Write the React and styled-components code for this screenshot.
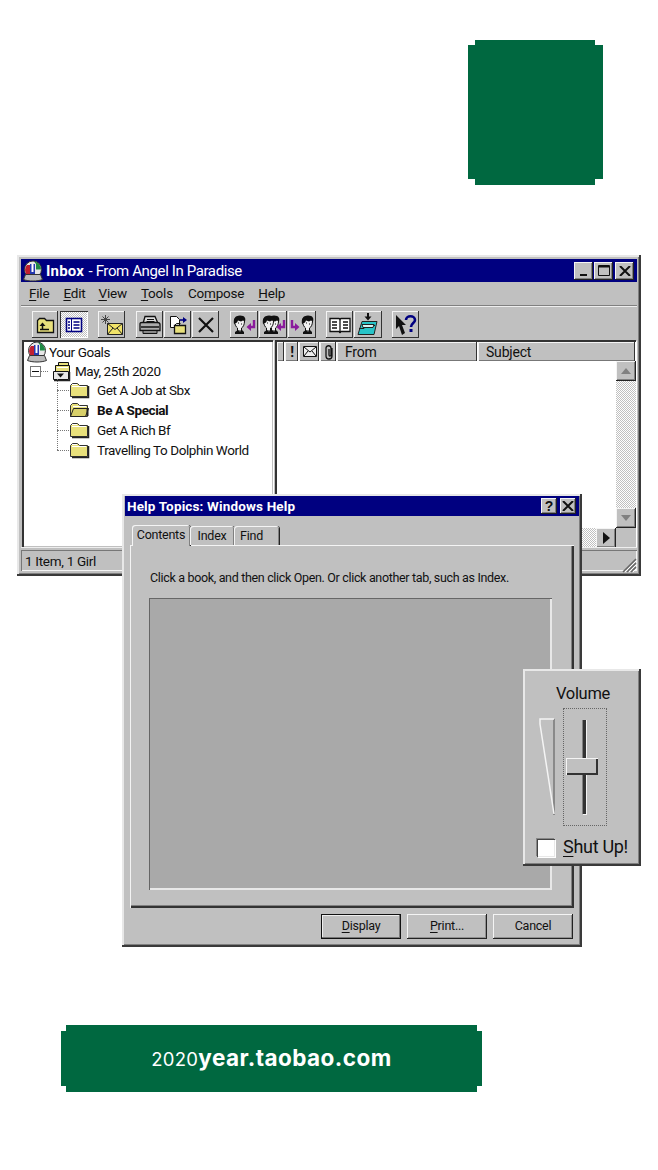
import React from 'react';
import styled, { createGlobalStyle, css } from 'styled-components';

const Global = createGlobalStyle`
  html, body { margin: 0; padding: 0; background: #fff; }
  body { font-family: Roboto, "Liberation Sans", Arial, sans-serif; color: #111; }
  * { box-sizing: border-box; }
`;
const GREEN = '#006840';
const FACE = '#c0c0c0';
const raised = css`box-shadow: inset -1px -1px 0 #222, inset 1px 1px 0 #f4f4f4, inset -2px -2px 0 #808080;`;
const windowEdge = css`box-shadow: inset -2px -2px 0 #3a3a3a, inset 2px 2px 0 #e8e8e8, inset -3px -3px 0 #808080;`;

const Page = styled.div`width: 658px; height: 1170px; background: #fff; overflow: hidden; display: flex; flex-direction: column;`;
const Square = styled.div`
  width: 135px; height: 145px; margin: 40px 0 0 468px; background: ${GREEN};
  clip-path: polygon(7px 0, 127px 0, 127px 5px, 135px 5px, 135px 139px, 127px 139px, 127px 145px, 7px 145px, 7px 139px, 0 139px, 0 5px, 7px 5px);
`;
const Desktop = styled.div`position: relative; height: 692px; margin-top: 70px; flex: none;`;
const Banner = styled.div`
  width: 421px; height: 67px; margin: 78px 0 0 61px; background: ${GREEN}; color: #fff;
  display: flex; align-items: baseline; justify-content: center; padding: 19px 0 0 0;
  font-family: "Inter", "Liberation Sans", sans-serif;
  clip-path: polygon(5px 0, 416px 0, 416px 6px, 421px 6px, 421px 61px, 416px 61px, 416px 67px, 5px 67px, 5px 61px, 0 61px, 0 6px, 5px 6px);
`;
const BannerYear = styled.span`font-size: 18.5px; font-weight: 400; letter-spacing: 0.3px;`;
const BannerHost = styled.span`font-size: 22.5px; font-weight: 700; letter-spacing: 0.45px;`;

const Win = styled.section`
  position: absolute; left: ${p => p.$x}px; top: ${p => p.$y}px; width: ${p => p.$w}px; height: ${p => p.$h}px;
  background: ${FACE}; display: flex; flex-direction: column; ${windowEdge};
`;
const TitleBar = styled.header`
  height: ${p => p.$h}px; margin: ${p => p.$m}; background: #000080; color: #fff; display: flex; align-items: center; flex: none;
  padding: 0 3px 0 ${p => p.$pl}px; gap: ${p => p.$gap}px;
`;
const TitleText = styled.div`font-size: 15px; letter-spacing: -0.38px; flex: 1; white-space: nowrap; b { font-weight: 700; letter-spacing: 0.2px; margin-right: 1px; }`;
const DialogTitle = styled.div`font-size: 13.5px; font-weight: 700; letter-spacing: 0.15px; flex: 1; white-space: nowrap;`;
const CapBtns = styled.div`display: flex; align-items: center;`;
const CapBtn = styled.button`
  width: ${p => p.$w}px; height: ${p => p.$tall}px; margin-left: ${p => p.$gap || 0}px; padding: 0; border: 0; background: ${FACE}; ${raised};
  display: flex; align-items: center; justify-content: center; color: #111; font: 700 14px "Liberation Sans", sans-serif;
`;
const Menu = styled.nav`height: 24px; display: flex; align-items: center; padding: 0 0 2px 8px; font-size: 13.5px; flex: none; margin: 0 4px;
  border-bottom: 1px solid #808080; box-shadow: 0 1px 0 #eee;`;
const MenuItem = styled.span`letter-spacing: -0.2px; margin-left: ${p => p.$gap || 0}px; u { text-decoration-thickness: 1px; text-underline-offset: 2px; }`;
const Toolbar = styled.div`height: 33px; display: flex; align-items: center; padding: 2px 0 0 11px; flex: none; margin: 1px 4px 0;`;
const ToolBtn = styled.button`
  width: ${p => p.$w || 27}px; height: 27px; margin-left: ${p => p.$gap || 0}px; padding: 0; border: 0; flex: none;
  display: flex; align-items: center; justify-content: center;
  ${p => p.$on ? css`background: repeating-conic-gradient(#c0c0c0 0 25%, #fff 0 50%) 0 0/2px 2px; box-shadow: inset 1px 1px 0 #333, inset -1px -1px 0 #fff;` : css`background: ${FACE}; box-shadow: inset -1px -1px 0 #333, inset 1px 1px 0 #f4f4f4;`}
`;
const Split = styled.div`flex: 1; display: flex; margin: 0 5px 0 5px; gap: 2px; min-height: 0;`;
const TreePane = styled.div`
  width: 251px; background: #fff; padding: 0 0 0 2px; font-size: 13.5px; letter-spacing: -0.42px;
  border-left: 2px solid #333; border-top: 2px solid #333; box-shadow: inset -1px -1px 0 #c0c0c0, 1px 1px 0 #fff;
`;
const TreeRow = styled.div`
  height: ${p => p.$h || 19.9}px; display: flex; align-items: center; position: relative; gap: ${p => p.$gap ?? 7}px;
  padding-left: ${p => p.$pad}px; font-weight: ${p => p.$bold ? 700 : 400}; white-space: nowrap;
`;
const Expander = styled.span`
  width: 11px; height: 11px; border: 1px solid #777; background: #fff; display: flex; align-items: center; justify-content: center; margin-right: 6px;
  position: relative; flex: none;
  &::before { content: ""; width: 7px; height: 1px; background: #111; }
  &::after { content: ""; position: absolute; left: 10px; top: 4px; width: 7px; border-top: 1px dotted #777; }
`;
const Branches = styled.div`
  margin-left: 31px; position: relative;
  &::before { content: ""; position: absolute; left: 0; top: -1px; height: 71px; border-left: 1px dotted #777; }
`;
const Branch = styled(TreeRow)`
  padding-left: 12px;
  &::before { content: ""; width: 12px; position: absolute; left: 0; top: 10px; border-top: 1px dotted #777; }
`;
const ListPane = styled.div`
  flex: 1; display: flex; flex-direction: column; min-width: 0; position: relative;
  border-left: 2px solid #333; border-top: 2px solid #333; box-shadow: 1px 1px 0 #fff;
`;
const Header = styled.div`display: flex; height: 19px; flex: none;`;
const HeadCell = styled.div`
  width: ${p => p.$w}px; flex: ${p => p.$grow ? 1 : 'none'}; background: ${FACE}; font-size: 14px; letter-spacing: -0.2px;
  display: flex; align-items: center; justify-content: ${p => p.$grow || p.$left ? 'flex-start' : 'center'}; padding-left: ${p => p.$left ? 8 : 0}px;
  box-shadow: inset -1px 0 0 #fff, inset -2px 0 0 #333, inset 1px 1px 0 #f4f4f4, inset 0 -1px 0 #777;
`;
const ListBody = styled.div`flex: 1; display: flex; background: #fff; min-height: 0;`;
const ListEmpty = styled.div`flex: 1;`;
const VScroll = styled.div`
  width: 20px; background: repeating-conic-gradient(#c0c0c0 0 25%, #fff 0 50%) 0 0/2px 2px; display: flex; flex-direction: column; justify-content: space-between;
`;
const ScrollBtn = styled.div`
  width: 20px; height: 20px; background: ${FACE}; ${raised}; display: flex; align-items: center; justify-content: center; flex: none;
`;
const HScroll = styled.div`height: 19px; display: flex; justify-content: flex-end; background: repeating-conic-gradient(#c0c0c0 0 25%, #fff 0 50%) 0 0/2px 2px; flex: none;`;
const Corner = styled.div`width: 20px; background: ${FACE};`;
const StatusBar = styled.footer`height: 26px; flex: none; display: flex; margin: 0 4px 3px; padding: 3px 0 0; position: relative; box-shadow: inset 0 1px 0 #eee;`;
const StatusCell = styled.div`flex: 1; font-size: 13.5px; height: 21px; letter-spacing: -0.3px; padding-left: 4px; display: flex; align-items: center;
  box-shadow: inset 1px 1px 0 #777, inset -1px -1px 0 #f4f4f4;`;
const Grip = styled.svg`position: absolute; right: 0; bottom: 0;`;

const TabRow = styled.div`display: flex; align-items: flex-end; height: 29px; margin: 0 0 0 10px; padding-top: 8px; flex: none; position: relative; z-index: 1;`;
const Tab = styled.div`
  height: ${p => p.$on ? 21 : 19}px; width: ${p => p.$w}px; font-size: 12.5px; display: flex; align-items: center; justify-content: center;
  background: ${FACE}; border-radius: 3px 3px 0 0; letter-spacing: -0.25px; margin-bottom: ${p => p.$on ? -1 : 0}px;
  box-shadow: inset 1px 1px 0 #f4f4f4, inset -1px 0 0 #808080, 1px 0 0 #222;
  padding: 0 ${p => p.$pr || 0}px ${p => p.$on ? 2 : 0}px 0;
`;
const TabPanel = styled.div`
  flex: 1; margin: 0 8px 0 8px; padding: 25px 22px 18px 19px; display: flex; flex-direction: column; min-height: 0;
  box-shadow: inset 1px 1px 0 #f4f4f4, inset -2px -2px 0 #333, inset -3px -3px 0 #808080;
`;
const Hint = styled.p`margin: 0 0 12px; font-size: 12.5px; line-height: 16px; height: 16px; letter-spacing: -0.33px; padding-left: 1px; white-space: nowrap;`;
const BookArea = styled.div`
  flex: 1; background: #a9a9a9; box-shadow: inset 1px 1px 0 #666, inset -2px -2px 0 #e8e8e8;
`;
const DialogFoot = styled.div`display: flex; gap: 6px; justify-content: flex-end; height: 39px; padding: 6px 9px 8px 0; flex: none;`;
const PushBtn = styled.button`
  width: 80px; height: 25px; padding: 0 0 3px; border: 0; background: ${FACE}; color: #111; font: 12.5px Roboto, "Liberation Sans", sans-serif; letter-spacing: -0.25px;
  box-shadow: ${p => p.$def ? 'inset 0 0 0 1px #111, inset -2px -2px 0 #777, inset 2px 2px 0 #eee' : 'inset -1px -1px 0 #222, inset 1px 1px 0 #f4f4f4, inset -2px -2px 0 #909090'};
  u { text-underline-offset: 2px; text-decoration-thickness: 1px; }
`;
const VolTitle = styled.div`font-size: 16.5px; text-align: center; letter-spacing: -0.3px; margin-top: 15px; height: 20px; line-height: 20px; padding-left: 2px;`;
const VolBody = styled.div`display: flex; margin-top: 4px; padding-left: 16px; gap: 8px; height: 118px;`;
const Wedge = styled.svg`margin-top: 10px; flex: none;`;
const SliderFrame = styled.div`width: 44px; height: 118px; border: 1px dotted #666; position: relative; display: flex; justify-content: center; padding: 11px 0 10px;`;
const SliderTrack = styled.div`width: 5px; height: 100%; background: #333; border-right: 1px solid #f4f4f4; border-bottom: 1px solid #f4f4f4; margin-right: 2px; border-left: 1px solid #808080;`;
const SliderThumb = styled.div`position: absolute; left: 2px; top: 49px; width: 32px; height: 17px; background: ${FACE};
  box-shadow: inset 1px 1px 0 #f4f4f4, inset -2px -2px 0 #333;`;
const Shut = styled.label`display: flex; align-items: center; gap: 8px; padding-left: 14px; margin-top: 10px; font-size: 18px; letter-spacing: -0.3px;
  u { text-underline-offset: 3px; text-decoration-thickness: 1px; }`;
const Check = styled.span`width: 18px; height: 18px; background: #fff; box-shadow: inset 1px 1px 0 #444, inset -1px -1px 0 #e8e8e8, 1px 1px 0 #fff, -1px -1px 0 #888; flex: none; margin-top: 3px;`;

/* icons */
const Y = '#e8e07c';
const Folder = ({ open }) => (
  <svg width="21" height="18" viewBox="0 0 21 18">
    <path d="M1.5 15.5v-11l2-2h5l2 2h8v11z" fill={Y} stroke="#333" />
    {open
      ? <><path d="M1.5 15.5l3-8h15l-3 8z" fill="#d8d06a" stroke="#222" /><path d="M4 5.5h13" stroke="#fff" /><path d="M18.5 7v8" stroke="#222" strokeWidth="2" /></>
      : <><path d="M3 5.5h14" stroke="#fff" /><path d="M3 3.5h5" stroke="#fff" /><path d="M19.5 5v11.5H3" fill="none" stroke="#222" strokeWidth="1.5" /></>}
  </svg>
);
const UpFolder = () => (
  <svg width="20" height="20" viewBox="0 0 20 20">
    <path d="M2.5 17.5v-12l2-2h5l2 2h7v12z" fill={Y} stroke="#111" strokeWidth="1.3" />
    <path d="M5 14.5h9" stroke="#111" strokeWidth="1.5" />
    <path d="M7.5 14.5V10" stroke="#111" strokeWidth="1.5" />
    <path d="M4.5 11l3-3.5 3 3.5z" fill="#111" />
  </svg>
);
const TreeIcon = () => (
  <svg width="20" height="20" viewBox="0 0 20 20"><rect x="2.5" y="3.5" width="15" height="13" fill="#fff" stroke="#000080" strokeWidth="1.6" /><path d="M7.5 4v12" stroke="#000080" /><path d="M4 7h2M4 10h2M4 13h2M9.5 7h6M9.5 10h6M9.5 13h6" stroke="#000080" strokeWidth="1.4" /></svg>
);
const NewMail = () => (
  <svg width="22" height="20" viewBox="0 0 22 20"><path d="M6.5 8.5h15v11h-15z" fill="#f0e268" stroke="#222" /><path d="M6.5 8.5l7.5 6 7.5-6M6.5 19.5l5.5-6.5M21.5 19.5l-5.5-6.5" fill="none" stroke="#222" /><path d="M4.5 0v9M0 4.5h9M1.5 1.5l6 6M7.5 1.5l-6 6" stroke="#444" /></svg>
);
const Printer = () => (
  <svg width="23" height="21" viewBox="0 0 23 21"><path d="M7 2.5h10l3 7H5z" fill="#ddd" stroke="#111" strokeWidth="1.3" /><path d="M9 5.5h7M8.5 7.5h8" stroke="#111" /><path d="M2 9.5c0-1 1-1 2-1h15c1 0 3 0 3 2v6H2z" fill="#aaa" stroke="#111" strokeWidth="1.3" /><path d="M3 13h18" stroke="#111" strokeWidth="1.5" /><path d="M5 16.5h14v3H5z" fill="#888" stroke="#111" /></svg>
);
const MoveTo = () => (
  <svg width="22" height="20" viewBox="0 0 22 20"><path d="M3.5 1.5h6l3 3v8h-9z" fill="#fff" stroke="#111" /><path d="M7.5 10.5h11v8h-11z" fill={Y} stroke="#111" strokeWidth="1.3" /><path d="M7.5 10.5l2-2h4" fill="none" stroke="#111" /><path d="M13 5h5" stroke="#000080" strokeWidth="1.6" /><path d="M16 2l4 3-4 3z" fill="#000080" /></svg>
);
const Cross = () => (
  <svg width="20" height="20" viewBox="0 0 20 20"><path d="M3 3l14 14M17 3L3 17" stroke="#111" strokeWidth="2.2" /></svg>
);
const Head = ({ x = 0 }) => (
  <g transform={`translate(${x} 0)`}>
    <path d="M2.5 7c0-3 2-4.5 5-4.5s5 1.5 5 4.5-1 6-3 7v3h-4v-3C4 13 2.5 10 2.5 7z" fill="#f2f2f2" stroke="#111" />
    <path d="M2 10C1 5 3 1.5 8 1.5s6 3 5 6l-2-1-2 1-3-1-1 2z" fill="#111" />
    <path d="M9 10h1M6 9h1" stroke="#111" />
    <path d="M3 18l3-2 2 2 2-2 2 2v2H3z" fill="#111" />
  </g>
);
const ArrowL = ({ x = 0 }) => (
  <g transform={`translate(${x} 0)`}><path d="M8 6v7H4" fill="none" stroke="#8a1b9c" strokeWidth="2.4" /><path d="M5 9l-4.5 4 4.5 4z" fill="#8a1b9c" /></g>
);
const Reply = () => <svg width="25" height="22" viewBox="0 0 25 22"><Head /><ArrowL x={14} /></svg>;
const ReplyAll = () => <svg width="25" height="22" viewBox="0 0 25 22"><Head x={5} /><Head /><ArrowL x={15} /></svg>;
const Forward = () => (
  <svg width="25" height="22" viewBox="0 0 25 22"><g transform="translate(10 0)"><Head /></g><path d="M2 6v7h4" fill="none" stroke="#8a1b9c" strokeWidth="2.4" /><path d="M5 9l4.5 4-4.5 4z" fill="#8a1b9c" /></svg>
);
const Book = () => (
  <svg width="22" height="20" viewBox="0 0 22 20"><path d="M1 3.5h9l1 1 1-1h9v13H12l-1 1-1-1H1z" fill="#fff" stroke="#111" strokeWidth="1.3" /><path d="M11 5v13M3 7h5M3 10h5M3 13h5M14 7h5M14 10h5M14 13h5" stroke="#111" strokeWidth="1.3" /></svg>
);
const Tray = () => (
  <svg width="24" height="24" viewBox="0 0 24 24"><path d="M12 0v4" stroke="#111" strokeWidth="2" /><path d="M8.5 3.5h7l-3.5 4z" fill="#111" /><path d="M6 8.5h15l-3 13H2z" fill="#28c4c8" stroke="#222" /><path d="M3 15.5h5l1-3h10" fill="none" stroke="#222" /><path d="M6 11.5h12l-1 3H7z" fill="#d8f4f4" stroke="#222" /></svg>
);
const HelpCursor = () => (
  <svg width="26" height="24" viewBox="0 0 26 24"><path d="M3 2l10 10H9l3 8-3 2-3-9-3 3z" fill="#111" /><path d="M13 7c0-5 9-5 9 0 0 3-4 3-4 7" fill="none" stroke="#000080" strokeWidth="2.6" /><path d="M16.5 16h3v3h-3z" fill="#000080" /></svg>
);
const Globe = () => (
  <svg width="22" height="22" viewBox="0 0 22 22"><circle cx="11" cy="9.5" r="8.5" fill="#e8e8e8" stroke="#333" /><path d="M12 1.5a8 8 0 0 1 7 8h-5V4z" fill="#1e8a44" /><path d="M3 10c0-1 1-4 2-5h3v9H4z" fill="#c02030" /><path d="M8 4h5v10H8z" fill="#2438b0" /><path d="M10.5 4v8" stroke="#fff" strokeWidth="2" /><path d="M3.5 14.5h15l2 5c-5 2-14 2-19 0z" fill="#bbb" stroke="#333" /></svg>
);
const Cabinet = () => (
  <svg width="22" height="21" viewBox="0 0 22 21"><path d="M8.5 1.5h10v10h-10z" fill={Y} stroke="#111" /><path d="M5.5 4.5h14v8h-14z" fill={Y} stroke="#111" /><path d="M7 6.5h11" stroke="#fff" /><path d="M3.5 10.5h15v8h-15z" fill="#e8e8e8" stroke="#111" /><path d="M19.5 11v8.5H4" fill="none" stroke="#222" strokeWidth="1.5" /><path d="M7 12.5h7l-3.5 4z" fill="#111" /></svg>
);
const ArrowUp = ({ c = '#808080' }) => <svg width="10" height="6" viewBox="0 0 10 6"><path d="M5 0l5 6H0z" fill={c} /></svg>;
const ArrowDown = ({ c = '#808080' }) => <svg width="10" height="6" viewBox="0 0 10 6"><path d="M5 6l5-6H0z" fill={c} /></svg>;
const ArrowRight = () => <svg width="7" height="12" viewBox="0 0 7 12"><path d="M0 0l7 6-7 6z" fill="#111" /></svg>;
const Min = () => <svg width="10" height="11"><path d="M1 9h7v2H1z" fill="#111" /></svg>;
const Max = () => <svg width="12" height="11"><path d="M.5.5h11v10H.5z" fill="none" stroke="#111" /><path d="M1 1.5h10" stroke="#111" strokeWidth="2" /></svg>;
const Close = () => <svg width="12" height="10" viewBox="0 0 12 10"><path d="M1 0l10 10M11 0L1 10" stroke="#111" strokeWidth="2" /></svg>;
const Envelope = () => <svg width="14" height="11" viewBox="0 0 14 11"><path d="M.5.5h13v10H.5z" fill="#eee" stroke="#111" /><path d="M1 1l6 5 6-5M1 10l4-5M13 10L9 5" fill="none" stroke="#111" /></svg>;
const Clip = () => <svg width="12" height="16" viewBox="0 0 12 16"><path d="M9 4v8c0 4-6 4-6 0V4c0-3 5-3 5 0v7c0 1.5-2 1.5-2 0V5" fill="none" stroke="#111" strokeWidth="1.3" /></svg>;

const App = () => (
  <Page>
    <Global />
    <Square />
    <Desktop>
      <Win $x={17} $y={0} $w={624} $h={321}>
        <TitleBar $h={23} $m="4px 4px 0 4px" $pl={1} $gap={2}>
          <Globe />
          <TitleText><b>Inbox</b> - From Angel In Paradise</TitleText>
          <CapBtns>
            <CapBtn $w={19} $tall={18}><Min /></CapBtn>
            <CapBtn $w={19} $tall={18} $gap={1}><Max /></CapBtn>
            <CapBtn $w={19} $tall={18} $gap={2}><Close /></CapBtn>
          </CapBtns>
        </TitleBar>
        <Menu>
          <MenuItem><u>F</u>ile</MenuItem>
          <MenuItem $gap={14}><u>E</u>dit</MenuItem>
          <MenuItem $gap={13}><u>V</u>iew</MenuItem>
          <MenuItem $gap={14}><u>T</u>ools</MenuItem>
          <MenuItem $gap={15}>Co<u>m</u>pose</MenuItem>
          <MenuItem $gap={14}><u>H</u>elp</MenuItem>
        </Menu>
        <Toolbar>
          <ToolBtn $w={26}><UpFolder /></ToolBtn>
          <ToolBtn $w={28} $gap={2} $on><TreeIcon /></ToolBtn>
          <ToolBtn $gap={10}><NewMail /></ToolBtn>
          <ToolBtn $gap={11}><Printer /></ToolBtn>
          <ToolBtn $gap={1}><MoveTo /></ToolBtn>
          <ToolBtn $gap={1}><Cross /></ToolBtn>
          <ToolBtn $w={28} $gap={11}><Reply /></ToolBtn>
          <ToolBtn $w={28} $gap={1}><ReplyAll /></ToolBtn>
          <ToolBtn $w={28} $gap={1}><Forward /></ToolBtn>
          <ToolBtn $gap={10}><Book /></ToolBtn>
          <ToolBtn $w={28} $gap={1}><Tray /></ToolBtn>
          <ToolBtn $gap={10}><HelpCursor /></ToolBtn>
        </Toolbar>
        <Split>
          <TreePane>
            <TreeRow $pad={0} $gap={1} $h={20}><Globe />Your Goals</TreeRow>
            <TreeRow $pad={4} $gap={3} $h={18}><Expander /><Cabinet />May, 25th 2020</TreeRow>
            <Branches>
              <Branch><Folder />Get A Job at Sbx</Branch>
              <Branch $bold><Folder open />Be A Special</Branch>
              <Branch><Folder />Get A Rich Bf</Branch>
              <Branch><Folder />Travelling To Dolphin World</Branch>
            </Branches>
          </TreePane>
          <ListPane>
            <Header>
              <HeadCell $w={8} />
              <HeadCell $w={14}><b>!</b></HeadCell>
              <HeadCell $w={21}><Envelope /></HeadCell>
              <HeadCell $w={17}><Clip /></HeadCell>
              <HeadCell $w={141} $left>From</HeadCell>
              <HeadCell $grow $left>Subject</HeadCell>
            </Header>
            <ListBody>
              <ListEmpty />
              <VScroll>
                <ScrollBtn><ArrowUp /></ScrollBtn>
                <ScrollBtn><ArrowDown /></ScrollBtn>
              </VScroll>
            </ListBody>
            <HScroll>
              <ScrollBtn><ArrowRight /></ScrollBtn>
              <Corner />
            </HScroll>
          </ListPane>
        </Split>
        <StatusBar>
          <StatusCell>1 Item, 1 Girl</StatusCell>
          <Grip width="16" height="16" viewBox="0 0 16 16"><path d="M15 2L2 15M15 6L6 15M15 10L10 15" stroke="#666" strokeWidth="1.5" /><path d="M15 4L4 15M15 8L8 15M15 12L12 15" stroke="#fff" /></Grip>
        </StatusBar>
      </Win>
      <Win $x={122} $y={239} $w={460} $h={453}>
        <TitleBar $h={20} $m="2px 3px 0 3px" $pl={2} $gap={5}>
          <DialogTitle>Help Topics: Windows Help</DialogTitle>
          <CapBtns>
            <CapBtn $w={16} $tall={16}>?</CapBtn>
            <CapBtn $w={16} $tall={16} $gap={3}><Close /></CapBtn>
          </CapBtns>
        </TitleBar>
        <TabRow>
          <Tab $on $w={58}>Contents</Tab>
          <Tab $w={44}>Index</Tab>
          <Tab $w={45} $pr={10}>Find</Tab>
        </TabRow>
        <TabPanel>
          <Hint>Click a book, and then click Open. Or click another tab, such as Index.</Hint>
          <BookArea />
        </TabPanel>
        <DialogFoot>
          <PushBtn $def><u>D</u>isplay</PushBtn>
          <PushBtn><u>P</u>rint...</PushBtn>
          <PushBtn>Cancel</PushBtn>
        </DialogFoot>
      </Win>
      <Win $x={523} $y={414} $w={118} $h={197}>
        <VolTitle>Volume</VolTitle>
        <VolBody>
          <Wedge width="16" height="98" viewBox="0 0 16 98">
            <path d="M15 1v96" fill="none" stroke="#777" strokeWidth="1.5" />
            <path d="M15 1H1v5l14 90" fill="none" stroke="#f4f4f4" strokeWidth="1.5" />
          </Wedge>
          <SliderFrame>
            <SliderTrack />
            <SliderThumb />
          </SliderFrame>
        </VolBody>
        <Shut><Check /><span><u>S</u>hut Up!</span></Shut>
      </Win>
    </Desktop>
    <Banner><BannerYear>2020</BannerYear><BannerHost>year.taobao.com</BannerHost></Banner>
  </Page>
);
export default App;
